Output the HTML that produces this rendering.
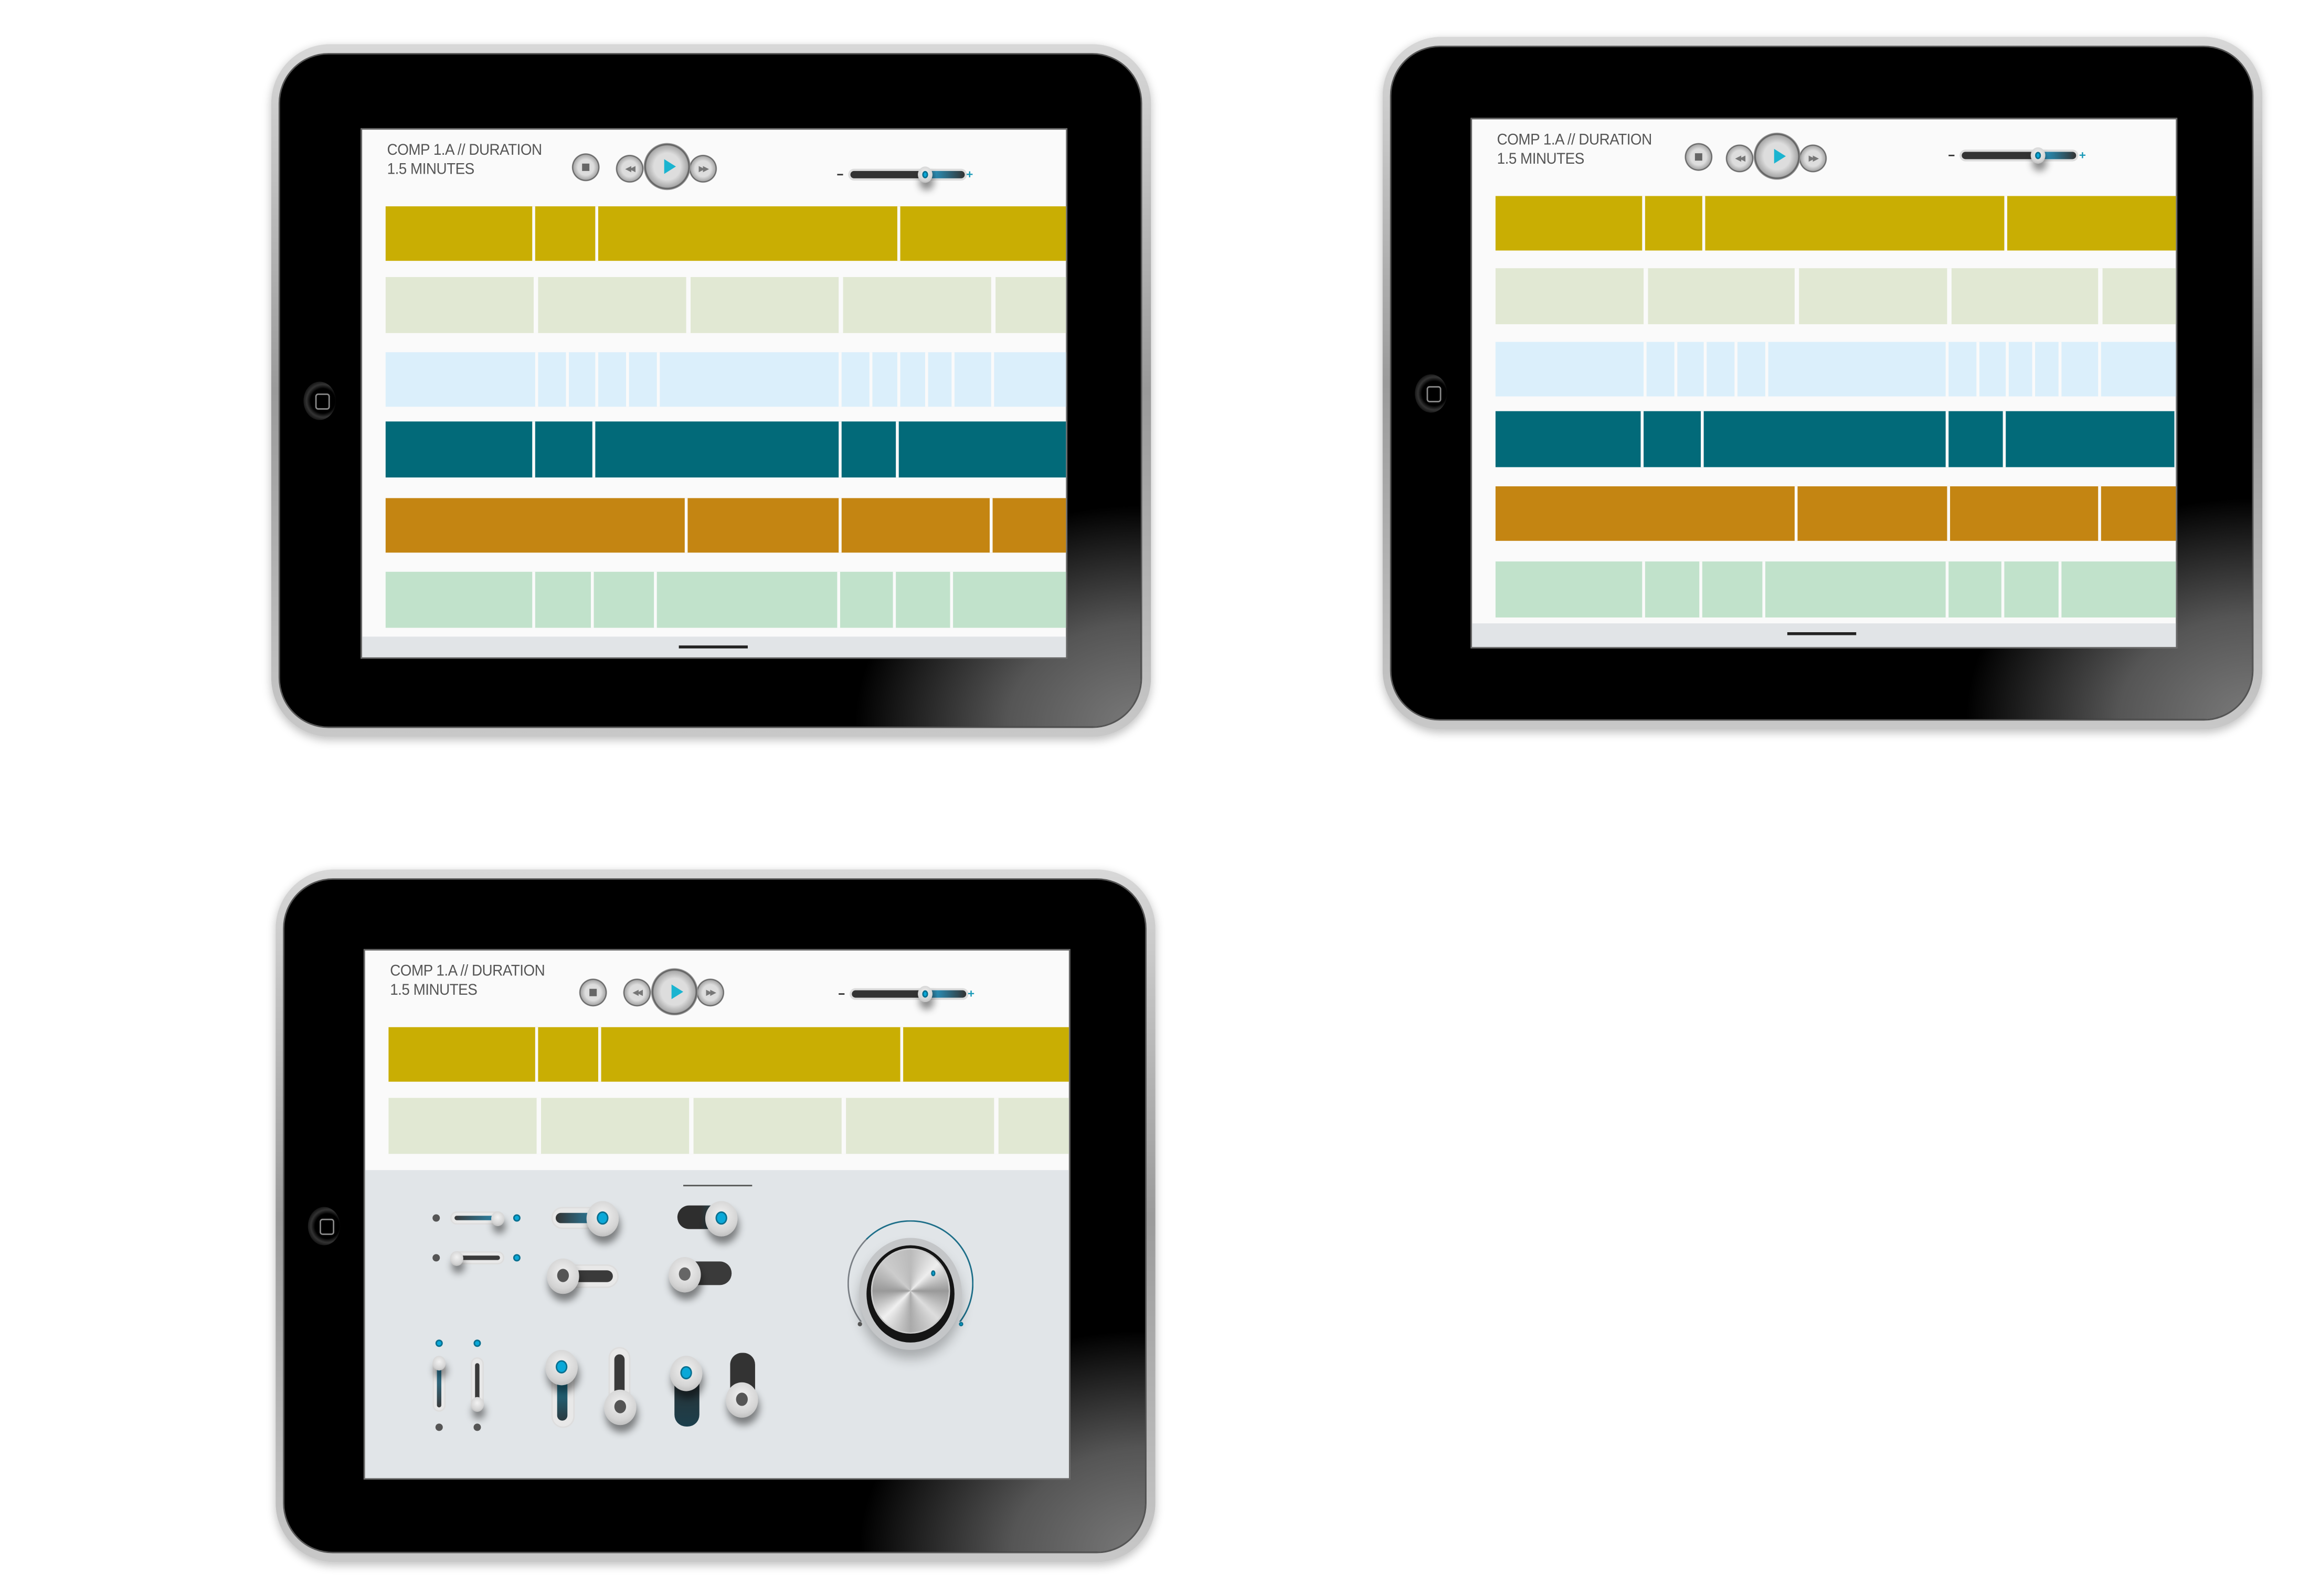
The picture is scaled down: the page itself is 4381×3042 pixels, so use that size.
<!DOCTYPE html>
<html><head><meta charset="utf-8"><style>
*{margin:0;padding:0;box-sizing:border-box}
html,body{width:4381px;height:3042px;background:#fff;overflow:hidden}
#w{position:absolute;left:0;top:0;width:1568px;height:1083px;transform:scale(2.79401,2.80886);transform-origin:0 0}
.tab{position:absolute;width:600px;height:470px;border-radius:40px;background:linear-gradient(180deg,#d8d8d8,#9a9a9a 50%,#c8c8c8);box-shadow:0 2px 6px rgba(0,0,0,.25)}
.bz{position:absolute;left:5px;top:6px;right:6px;bottom:6px;border-radius:34px;background:#000;overflow:hidden;border:1px solid #555}
.bz:after{content:"";position:absolute;left:0;top:0;right:0;bottom:0;background:radial-gradient(ellipse 260px 200px at 100% 100%,#7a7a7a 0%,#555 35%,rgba(0,0,0,0) 75%)}
.home{position:absolute;left:16px;top:223px;width:22px;height:26px;border-radius:50%;background:radial-gradient(circle at 60% 50%,#000 45%,#333 60%,#111 75%);z-index:2}
.home:before{content:"";position:absolute;left:8px;top:8px;width:8px;height:9px;border:1.5px solid #888;border-radius:2px}
.scr{position:absolute;left:61px;top:57px;width:482px;height:360px;background:#fafafa;border:1px solid #666;z-index:3;overflow:hidden}
.ttl{position:absolute;left:17px;top:8px;font:10.5px/13px "Liberation Sans",sans-serif;color:#555;letter-spacing:-.2px;transform:scaleX(.95);transform-origin:0 0}
.btn{position:absolute;border-radius:50%;background:radial-gradient(circle,#ddd 40%,#aaa 62%,#555 66%,#c8c8c8 72%,#e4e4e4);}
.btn i{position:absolute;left:50%;top:50%;transform:translate(-50%,-50%);font:bold 5px sans-serif;color:#777;font-style:normal;letter-spacing:-1px}
.pl{position:absolute;border-left:8px solid #1ab4d0;border-top:5px solid transparent;border-bottom:5px solid transparent}
.row{position:absolute;left:16px;width:465px;height:37px}
.d{position:absolute;top:0;width:2px;height:100%;background:#fafafa}
.bar{position:absolute;left:0;top:344px;width:482px;height:16px;background:#e1e4e7}
.knob{position:absolute;border-radius:50%;background:radial-gradient(circle at 50% 40%,#f2f2f2,#d4d4d4 60%,#aaa);box-shadow:1px 5px 5px rgba(0,0,0,.45)}
.cy{position:absolute;border-radius:50%;background:#0aa8d8;border:1px solid #0a7090}
.gd{position:absolute;border-radius:50%;background:#555}
.tr{position:absolute;border-radius:8px;background:#e8e8e8;box-shadow:inset 0 0 0 1px #ddd}
.tri{position:absolute;border-radius:6px;background:#3a3a3a}
</style></head><body><div id="w">

<div class="tab" style="left:185px;top:30px"><div class="bz"><div class="home" style="top:222px"></div></div>
<div class="scr">
<div class="ttl">COMP 1.A // DURATION<br>1.5 MINUTES</div>
<div class="btn" style="left:143px;top:16px;width:19px;height:19px"></div><div style="position:absolute;left:150px;top:23px;width:5px;height:5px;background:#666"></div>
<div class="btn" style="left:173px;top:17px;width:19px;height:19px"><i>◀◀</i></div>
<div class="btn" style="left:223px;top:17px;width:19px;height:19px"><i>▶▶</i></div>
<div class="btn" style="left:192px;top:9px;width:32px;height:32px"></div><div class="pl" style="left:206px;top:20px"></div>
<div style="position:absolute;left:324px;top:30px;width:4px;height:1px;background:#333"></div>
<div style="position:absolute;left:333px;top:28px;width:78px;height:5px;border-radius:3px;background:linear-gradient(90deg,#333 60%,#2a8ab0 75%,#333);box-shadow:0 0 0 1.5px #ddd"></div>
<div class="knob" style="left:379px;top:25px;width:10px;height:11px"></div><div class="cy" style="left:382px;top:28px;width:4px;height:5px"></div>
<div style="position:absolute;left:412px;top:26px;color:#1a9ab8;font:bold 8px sans-serif">+</div>
<div class="row" style="top:52px;background:#c9ae03"><div class="d" style="left:100px"></div><div class="d" style="left:143px"></div><div class="d" style="left:349px"></div></div>
<div class="row" style="top:100px;height:38px;background:#e1e8d3"><div class="d" style="left:101px;width:3px"></div><div class="d" style="left:205px;width:3px"></div><div class="d" style="left:309px;width:3px"></div><div class="d" style="left:413px;width:3px"></div></div>
<div class="row" style="top:151px;background:#dbeffb"><div class="d" style="left:102px"></div><div class="d" style="left:123px"></div><div class="d" style="left:143px"></div><div class="d" style="left:164px"></div><div class="d" style="left:185px"></div><div class="d" style="left:309px"></div><div class="d" style="left:330px"></div><div class="d" style="left:349px"></div><div class="d" style="left:368px"></div><div class="d" style="left:386px"></div><div class="d" style="left:413px"></div></div>
<div class="row" style="top:198px;height:38px;background:#026a79"><div class="d" style="left:100px"></div><div class="d" style="left:141px"></div><div class="d" style="left:309px"></div><div class="d" style="left:348px"></div><div class="d" style="left:464px"></div></div>
<div class="row" style="top:250px;background:#c48512"><div class="d" style="left:204px"></div><div class="d" style="left:309px"></div><div class="d" style="left:412px"></div></div>
<div class="row" style="top:300px;height:38px;background:#c1e2cb"><div class="d" style="left:100px"></div><div class="d" style="left:140px"></div><div class="d" style="left:183px"></div><div class="d" style="left:308px"></div><div class="d" style="left:346px"></div><div class="d" style="left:385px"></div></div>
<div class="bar"><div style="position:absolute;left:216px;top:6px;width:47px;height:1.5px;background:#222"></div></div>
</div></div>

<div class="tab" style="left:943px;top:25px"><div class="bz"><div class="home" style="top:222px"></div></div>
<div class="scr" style="left:60px;top:55px">
<div class="ttl">COMP 1.A // DURATION<br>1.5 MINUTES</div>
<div class="btn" style="left:145px;top:16px;width:19px;height:19px"></div><div style="position:absolute;left:152px;top:23px;width:5px;height:5px;background:#666"></div>
<div class="btn" style="left:173px;top:17px;width:19px;height:19px"><i>◀◀</i></div>
<div class="btn" style="left:223px;top:17px;width:19px;height:19px"><i>▶▶</i></div>
<div class="btn" style="left:192px;top:9px;width:32px;height:32px"></div><div class="pl" style="left:206px;top:20px"></div>
<div style="position:absolute;left:325px;top:24px;width:4px;height:1px;background:#333"></div>
<div style="position:absolute;left:334px;top:22px;width:78px;height:5px;border-radius:3px;background:linear-gradient(90deg,#333 60%,#2a8ab0 75%,#333);box-shadow:0 0 0 1.5px #ddd"></div>
<div class="knob" style="left:381px;top:19px;width:10px;height:11px"></div><div class="cy" style="left:384px;top:22px;width:4px;height:5px"></div>
<div style="position:absolute;left:414px;top:20px;color:#1a9ab8;font:bold 8px sans-serif">+</div>
<div class="row" style="top:52px;background:#c9ae03"><div class="d" style="left:100px"></div><div class="d" style="left:141px"></div><div class="d" style="left:347px"></div></div>
<div class="row" style="top:101px;height:38px;background:#e1e8d3"><div class="d" style="left:101px;width:3px"></div><div class="d" style="left:204px;width:3px"></div><div class="d" style="left:308px;width:3px"></div><div class="d" style="left:411px;width:3px"></div></div>
<div class="row" style="top:151px;background:#dbeffb"><div class="d" style="left:101px"></div><div class="d" style="left:122px"></div><div class="d" style="left:142px"></div><div class="d" style="left:163px"></div><div class="d" style="left:184px"></div><div class="d" style="left:307px"></div><div class="d" style="left:328px"></div><div class="d" style="left:348px"></div><div class="d" style="left:366px"></div><div class="d" style="left:384px"></div><div class="d" style="left:411px"></div></div>
<div class="row" style="top:198px;height:38px;background:#026a79"><div class="d" style="left:99px"></div><div class="d" style="left:140px"></div><div class="d" style="left:307px"></div><div class="d" style="left:346px"></div><div class="d" style="left:463px"></div></div>
<div class="row" style="top:249px;background:#c48512"><div class="d" style="left:204px"></div><div class="d" style="left:308px"></div><div class="d" style="left:411px"></div></div>
<div class="row" style="top:300px;height:38px;background:#c1e2cb"><div class="d" style="left:100px"></div><div class="d" style="left:139px"></div><div class="d" style="left:182px"></div><div class="d" style="left:307px"></div><div class="d" style="left:345px"></div><div class="d" style="left:384px"></div></div>
<div class="bar" style="top:342px;height:18px"><div style="position:absolute;left:215px;top:6px;width:47px;height:1.5px;background:#222"></div></div>
</div></div>

<div class="tab" style="left:188px;top:590px"><div class="bz"><div class="home" style="top:222px"></div></div>
<div class="scr" style="left:60px;top:54px">
<div class="ttl">COMP 1.A // DURATION<br>1.5 MINUTES</div>
<div class="btn" style="left:146px;top:19px;width:19px;height:19px"></div><div style="position:absolute;left:153px;top:26px;width:5px;height:5px;background:#666"></div>
<div class="btn" style="left:176px;top:19px;width:19px;height:19px"><i>◀◀</i></div>
<div class="btn" style="left:226px;top:19px;width:19px;height:19px"><i>▶▶</i></div>
<div class="btn" style="left:195px;top:12px;width:32px;height:32px"></div><div class="pl" style="left:209px;top:23px"></div>
<div style="position:absolute;left:323px;top:29px;width:4px;height:1px;background:#333"></div>
<div style="position:absolute;left:332px;top:27px;width:78px;height:5px;border-radius:3px;background:linear-gradient(90deg,#333 60%,#2a8ab0 75%,#333);box-shadow:0 0 0 1.5px #ddd"></div>
<div class="knob" style="left:377px;top:24px;width:10px;height:11px"></div><div class="cy" style="left:380px;top:27px;width:4px;height:5px"></div>
<div style="position:absolute;left:411px;top:25px;color:#1a9ab8;font:bold 8px sans-serif">+</div>
<div class="row" style="top:52px;background:#c9ae03"><div class="d" style="left:100px"></div><div class="d" style="left:143px"></div><div class="d" style="left:349px"></div></div>
<div class="row" style="top:100px;height:38px;background:#e1e8d3"><div class="d" style="left:101px;width:3px"></div><div class="d" style="left:205px;width:3px"></div><div class="d" style="left:309px;width:3px"></div><div class="d" style="left:413px;width:3px"></div></div>
<div style="position:absolute;left:0;top:149px;width:482px;height:211px;background:#e1e5e8">
 <div style="position:absolute;left:217px;top:10px;width:47px;height:1px;background:#555"></div>
 <div class="gd" style="left:46px;top:30px;width:5px;height:5px"></div>
 <div class="tr" style="left:58px;top:28px;width:37px;height:9px"></div><div class="tri" style="left:61px;top:31px;width:30px;height:3px;background:linear-gradient(90deg,#3a3a3a,#2a8ab0)"></div>
 <div class="knob" style="left:86px;top:28px;width:9px;height:10px"></div>
 <div class="cy" style="left:101px;top:30px;width:5px;height:5px"></div>
 <div class="gd" style="left:46px;top:57px;width:5px;height:5px"></div>
 <div class="tr" style="left:58px;top:55px;width:37px;height:9px"></div><div class="tri" style="left:62px;top:58px;width:30px;height:3px"></div>
 <div class="knob" style="left:58px;top:55px;width:9px;height:10px"></div>
 <div class="cy" style="left:101px;top:57px;width:5px;height:5px"></div>
 <div class="tr" style="left:127px;top:25px;width:42px;height:15px"></div><div class="tri" style="left:130px;top:29px;width:30px;height:7px;background:linear-gradient(90deg,#333,#2a8ab0)"></div>
 <div class="knob" style="left:151px;top:21px;width:22px;height:24px"></div><div class="cy" style="left:158px;top:28px;width:8px;height:9px"></div>
 <div class="tr" style="left:127px;top:64px;width:46px;height:16px"></div><div class="tri" style="left:135px;top:68px;width:34px;height:8px"></div>
 <div class="knob" style="left:124px;top:60px;width:22px;height:24px"></div><div class="gd" style="left:131px;top:67px;width:8px;height:9px"></div>
 <div class="tri" style="left:213px;top:24px;width:40px;height:16px;border-radius:8px;background:linear-gradient(90deg,#2e2e2e 40%,#1f6f88)"></div>
 <div class="knob" style="left:232px;top:21px;width:22px;height:24px"></div><div class="cy" style="left:239px;top:28px;width:8px;height:9px"></div>
 <div class="tri" style="left:212px;top:62px;width:38px;height:16px;border-radius:8px"></div>
 <div class="knob" style="left:207px;top:59px;width:22px;height:24px"></div><div class="gd" style="left:214px;top:66px;width:8px;height:9px;background:#666"></div>
 <div style="position:absolute;left:329px;top:185px;width:86px;height:86px;border-radius:50%;border:1.3px solid #7a7f85;border-top-color:#1d6e88;border-right-color:#1d6e88;transform:translateY(-151px);clip-path:polygon(0 0,100% 0,100% 80%,0 80%)"></div>
 <div style="position:absolute;left:337px;top:46px;width:70px;height:76px;border-radius:50%;background:#c4c6c8;box-shadow:0 6px 8px rgba(0,0,0,.25)"></div>
 <div style="position:absolute;left:342px;top:51px;width:60px;height:66px;border-radius:50%;background:#151515"></div>
 <div style="position:absolute;left:345px;top:53px;width:54px;height:58px;border-radius:50%;background:conic-gradient(#bbb,#eee,#999,#ddd,#aaa,#f0f0f0,#999,#ccc,#bbb);border:1px solid #ccc"></div>
 <div class="cy" style="left:386px;top:68px;width:3px;height:4px"></div>
 <div class="gd" style="left:336px;top:103px;width:3px;height:3px"></div>
 <div class="cy" style="left:405px;top:103px;width:3px;height:3px"></div>
 <div class="cy" style="left:48px;top:115px;width:5px;height:5px"></div>
 <div class="cy" style="left:74px;top:115px;width:5px;height:5px"></div>
 <div class="tr" style="left:46px;top:127px;width:9px;height:37px"></div><div class="tri" style="left:49px;top:131px;width:3px;height:30px;background:linear-gradient(#2a8ab0,#3a3a3a)"></div>
 <div class="knob" style="left:46px;top:126px;width:9px;height:10px"></div>
 <div class="tr" style="left:72px;top:127px;width:9px;height:37px"></div><div class="tri" style="left:75px;top:131px;width:3px;height:30px"></div>
 <div class="knob" style="left:72px;top:154px;width:9px;height:10px"></div>
 <div class="gd" style="left:48px;top:172px;width:5px;height:5px"></div>
 <div class="gd" style="left:74px;top:172px;width:5px;height:5px"></div>
 <div class="tr" style="left:127px;top:125px;width:16px;height:50px"></div><div class="tri" style="left:131px;top:130px;width:7px;height:40px;background:linear-gradient(#3a3a3a,#1f6f88 40%,#2a3a40)"></div>
 <div class="knob" style="left:123px;top:122px;width:22px;height:24px"></div><div class="cy" style="left:130px;top:129px;width:8px;height:9px"></div>
 <div class="tr" style="left:166px;top:120px;width:15px;height:50px"></div><div class="tri" style="left:170px;top:125px;width:7px;height:38px"></div>
 <div class="knob" style="left:163px;top:149px;width:22px;height:24px"></div><div class="gd" style="left:170px;top:156px;width:8px;height:9px"></div>
 <div class="tri" style="left:211px;top:132px;width:17px;height:42px;border-radius:8px;background:linear-gradient(#2e2e2e,#1c3f4c)"></div>
 <div class="knob" style="left:208px;top:126px;width:22px;height:24px"></div><div class="cy" style="left:215px;top:133px;width:8px;height:9px"></div>
 <div class="tri" style="left:249px;top:124px;width:17px;height:40px;border-radius:8px;background:#333"></div>
 <div class="knob" style="left:246px;top:144px;width:22px;height:24px"></div><div class="gd" style="left:253px;top:151px;width:8px;height:9px"></div>
</div>
</div></div>

</div></body></html>
